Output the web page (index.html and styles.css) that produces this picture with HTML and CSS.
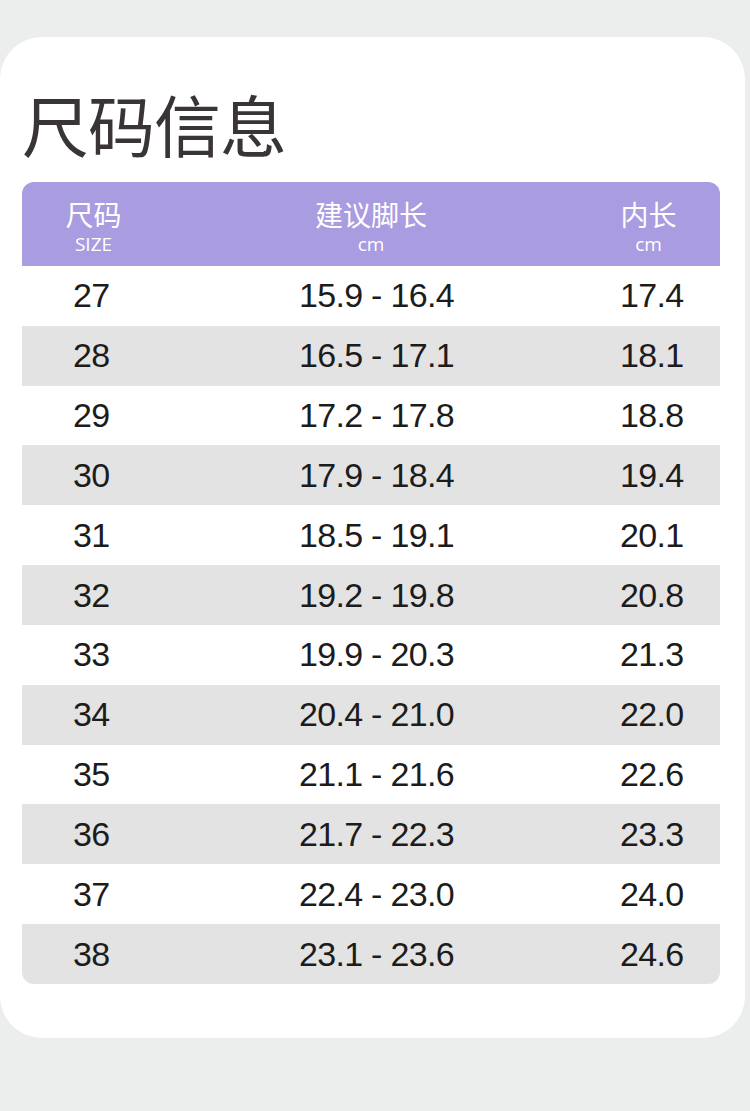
FILE: index.html
```html
<!DOCTYPE html>
<html lang="zh">
<head>
<meta charset="utf-8">
<link rel="stylesheet" href="styles.css">
</head>
<body>
<div class="card">
  <h1 class="title">尺码信息</h1>
  <div class="table">
    <div class="head">
      <div class="hc"><span class="zh">尺码</span><span class="en">SIZE</span></div>
      <div class="hc"><span class="zh">建议脚长</span><span class="en">cm</span></div>
      <div class="hc"><span class="zh">内长</span><span class="en">cm</span></div>
    </div>
    <div class="row"><span class="c1">27</span><span class="c2">15.9 - 16.4</span><span class="c3">17.4</span></div>
    <div class="row alt"><span class="c1">28</span><span class="c2">16.5 - 17.1</span><span class="c3">18.1</span></div>
    <div class="row"><span class="c1">29</span><span class="c2">17.2 - 17.8</span><span class="c3">18.8</span></div>
    <div class="row alt"><span class="c1">30</span><span class="c2">17.9 - 18.4</span><span class="c3">19.4</span></div>
    <div class="row"><span class="c1">31</span><span class="c2">18.5 - 19.1</span><span class="c3">20.1</span></div>
    <div class="row alt"><span class="c1">32</span><span class="c2">19.2 - 19.8</span><span class="c3">20.8</span></div>
    <div class="row"><span class="c1">33</span><span class="c2">19.9 - 20.3</span><span class="c3">21.3</span></div>
    <div class="row alt"><span class="c1">34</span><span class="c2">20.4 - 21.0</span><span class="c3">22.0</span></div>
    <div class="row"><span class="c1">35</span><span class="c2">21.1 - 21.6</span><span class="c3">22.6</span></div>
    <div class="row alt"><span class="c1">36</span><span class="c2">21.7 - 22.3</span><span class="c3">23.3</span></div>
    <div class="row"><span class="c1">37</span><span class="c2">22.4 - 23.0</span><span class="c3">24.0</span></div>
    <div class="row alt last"><span class="c1">38</span><span class="c2">23.1 - 23.6</span><span class="c3">24.6</span></div>
  </div>
</div>
</body>
</html>
```
FILE: styles.css
```css
html, body {
  margin: 0;
  padding: 0;
}
body {
  background: #eceeed;
  width: 750px;
  height: 1111px;
  overflow: hidden;
  font-family: "Noto Sans CJK SC", "Noto Sans", sans-serif;
}
.card {
  margin-top: 37px;
  width: 745px;
  height: 1001px;
  background: #ffffff;
  border-radius: 42px;
  box-sizing: border-box;
  padding: 0 0 0 22px;
  display: flex;
  flex-direction: column;
}
.title {
  margin: 0;
  padding-top: 44px;
  height: 145px;
  box-sizing: border-box;
  font-size: 67px;
  line-height: 84px;
  font-weight: 400;
  color: #3a3535;
  letter-spacing: -1px;
}
.table {
  width: 698px;
  display: flex;
  flex-direction: column;
}
.head {
  height: 84px;
  box-sizing: border-box;
  padding-top: 18px;
  background: #a99ce0;
  border-radius: 12px 12px 0 0;
  display: grid;
  grid-template-columns: 143px 412px 143px;
  align-items: start;
}
.hc {
  display: flex;
  flex-direction: column;
  align-items: center;
  gap: 6px;
  color: #ffffff;
}
.hc .zh {
  display: block;
  font-size: 28px;
  line-height: 28px;
  font-weight: 400;
}
.hc .en {
  display: block;
  font-size: 19px;
  line-height: 20px;
  font-family: "Open Sans", "Noto Sans", sans-serif;
}
.row {
  height: 59.83px;
  display: grid;
  grid-template-columns: 143px 412px 143px;
  align-items: center;
  background: #ffffff;
  font-family: "Liberation Sans", sans-serif;
  font-size: 34px;
  letter-spacing: -0.7px;
  color: #1c1c1c;
}
.row.alt {
  background: #e3e3e3;
}
.row.last {
  border-radius: 0 0 12px 12px;
}
.c1 { padding-left: 51px; }
.c2 { padding-left: 134px; }
.c3 { padding-left: 43px; }
```
